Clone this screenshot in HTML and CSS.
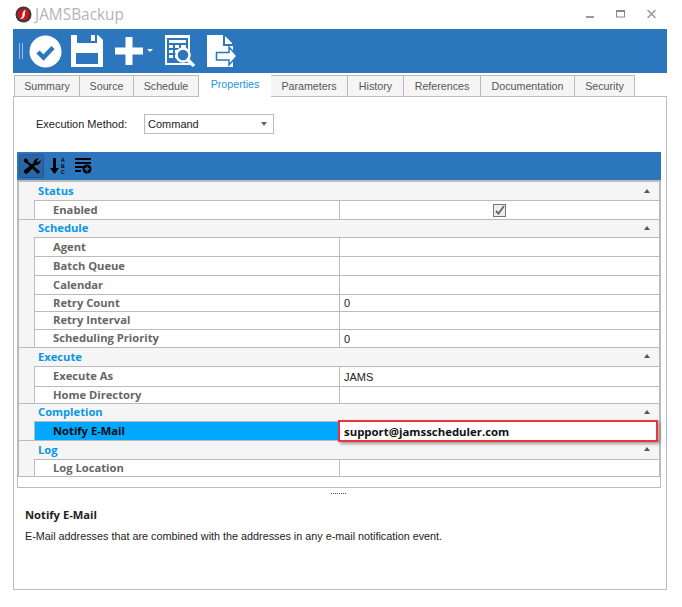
FILE: index.html
```html
<!DOCTYPE html>
<html lang="en">
<head>
    <meta charset="UTF-8">
    <title>JAMSBackup</title>
    <link rel="stylesheet" href="styles.css">
</head>
<body>
    <div class="window">
        <!-- title bar -->
        <div class="title-bar">
            <svg class="app-icon" width="17" height="17" viewBox="0 0 17 17">
                <circle cx="8.5" cy="8.5" r="8" fill="#3a3a3a"/>
                <circle cx="8.5" cy="8.5" r="6" fill="#c8161d"/>
                <path d="M10.5 3.5 Q7 6 7.5 9 Q7.5 11.5 5 13 Q9 13 9.7 9.5 Q10 6.5 10.5 3.5Z" fill="#fff"/>
            </svg>
            <span class="app-title">JAMSBackup</span>
            <div class="win-controls">
                <svg width="8" height="8" viewBox="0 0 8 8"><rect x="0" y="6" width="8" height="2" fill="#999"/></svg>
                <svg width="10" height="8" viewBox="0 0 10 8"><rect x="0.5" y="0.5" width="8" height="6.5" fill="none" stroke="#888"/><rect x="0" y="0" width="9" height="2" fill="#888"/></svg>
                <svg width="9" height="8" viewBox="0 0 9 8"><path d="M0.5 0 L8.5 8 M8.5 0 L0.5 8" stroke="#999" stroke-width="1.5"/></svg>
            </div>
        </div>

        <!-- main toolbar -->
        <div class="toolbar">
            <span class="grip"></span>
            <svg class="tool-check" width="33" height="33" viewBox="0 0 33 33">
                <circle cx="16.5" cy="16.5" r="16" fill="#fff"/>
                <path d="M9 17 L14.5 22.5 L24 12.5" fill="none" stroke="#2b76bd" stroke-width="4.5"/>
            </svg>
            <svg class="tool-save" width="32" height="32" viewBox="0 0 32 32">
                <path d="M0 0 H27 L32 5 V32 H0Z" fill="#fff"/>
                <rect x="6" y="0" width="20" height="8" fill="#2b76bd"/>
                <rect x="20" y="0" width="4" height="6" fill="#fff"/>
                <rect x="5" y="18" width="22" height="11" fill="#2b76bd"/>
            </svg>
            <svg class="tool-plus" width="28" height="28" viewBox="0 0 28 28">
                <path d="M10.5 0 H17.5 V10.5 H28 V17.5 H17.5 V28 H10.5 V17.5 H0 V10.5 H10.5Z" fill="#fff"/>
            </svg>
            <span class="caret"></span>
            <svg class="tool-report" width="32" height="32" viewBox="0 0 32 32">
                <rect x="1" y="0" width="25" height="30" fill="#fff"/>
                <rect x="3" y="3" width="21" height="25" fill="#2b76bd"/>
                <path d="M5 5 H22 V8 H5Z M5 10 H9 V13 H5Z M11 10 H15 V13 H11Z M17 10 H22 V13 H17Z M5 15 H9 V18 H5Z M11 15 H14 V18 H11Z M5 20 H9 V23 H5Z M11 20 H14 V23 H11Z" fill="#fff"/>
                <circle cx="19" cy="20" r="6.5" fill="#2b76bd" stroke="#fff" stroke-width="2.5"/>
                <path d="M24 25 L30 31" stroke="#fff" stroke-width="3.5"/>
            </svg>
            <svg class="tool-export" width="31" height="33" viewBox="0 0 31 33">
                <path d="M0 0 H16 V11 H26 V32 H0Z" fill="#fff"/>
                <path d="M18 1 L25 8 V9 H18Z" fill="#fff"/>
                <path d="M9.5 17.5 H22 V12 L30 21 L22 30 V25 H9.5Z" fill="#fff" stroke="#2b76bd" stroke-width="1.5"/>
            </svg>
        </div>

        <!-- tabs -->
        <div class="tabs">
            <div class="tab t-summary">Summary</div>
            <div class="tab t-source">Source</div>
            <div class="tab t-schedule">Schedule</div>
            <div class="tab tab-active t-properties">Properties</div>
            <div class="tab t-parameters">Parameters</div>
            <div class="tab t-history">History</div>
            <div class="tab t-references">References</div>
            <div class="tab t-documentation">Documentation</div>
            <div class="tab t-security">Security</div>
        </div>

        <div class="panel">
            <div class="method-row">
                <span class="method-label">Execution Method:</span>
                <div class="select">
                    <span>Command</span>
                    <span class="select-arrow"></span>
                </div>
            </div>

            <div class="grid-toolbar">
                <span class="grid-btn grid-btn-on">
                    <svg width="18" height="16" viewBox="0 0 18 16">
                        <path d="M0.5 2 L2.5 0 L5 2 L5 3.5 L17 13.5 L15 16 L3.5 5 L2 5Z" fill="#000"/>
                        <path d="M10.5 5 C10.5 2 13 0 16 0.5 L13.5 3 L15 4.5 L17.5 2 C18 5 15.5 7.5 12.5 7 L5 15 C4 16 2.5 16 1.5 15 C0.5 14 0.5 13 1.5 12Z" fill="#000"/>
                    </svg>
                </span>
                <span class="grid-btn">
                    <svg width="17" height="18" viewBox="0 0 17 18">
                        <path d="M3 1 H6 V11 H9 L4.5 17 L0 11 H3Z" fill="#000"/>
                        <text class="sort-letter" x="11" y="5">A</text>
                        <text class="sort-letter" x="11" y="11">B</text>
                        <text class="sort-letter" x="11" y="17">C</text>
                    </svg>
                </span>
                <span class="grid-btn">
                    <svg width="17" height="16" viewBox="0 0 17 16">
                        <path d="M0 0 H16 V2 H0Z M0 4 H16 V6 H0Z M0 8 H8 V10 H0Z M0 12 H6 V14 H0Z" fill="#000"/>
                        <circle cx="12" cy="11" r="4.5" fill="#000"/>
                        <path d="M12 8.5 V13.5 M9.5 11 H14.5" stroke="#2b76bd" stroke-width="1.3"/>
                    </svg>
                </span>
            </div>

            <div class="prop-grid">
                <div class="prop-rows">
                    <div class="group-row h18"><span>Status</span><i class="collapse"></i></div>
                    <div class="prop-row h19">
                        <div class="prop-name">Enabled</div>
                        <div class="prop-value center"><span class="check"><svg width="10" height="10" viewBox="0 0 10 10"><path d="M1 6 L3.5 8.5 L9 1" fill="none" stroke="#666" stroke-width="1.8"/></svg></span></div>
                    </div>
                    <div class="group-row h18"><span>Schedule</span><i class="collapse"></i></div>
                    <div class="prop-row h19"><div class="prop-name">Agent</div><div class="prop-value"></div></div>
                    <div class="prop-row h19"><div class="prop-name">Batch Queue</div><div class="prop-value"></div></div>
                    <div class="prop-row h19"><div class="prop-name">Calendar</div><div class="prop-value"></div></div>
                    <div class="prop-row h17"><div class="prop-name">Retry Count</div><div class="prop-value">0</div></div>
                    <div class="prop-row h18"><div class="prop-name">Retry Interval</div><div class="prop-value"></div></div>
                    <div class="prop-row h18"><div class="prop-name">Scheduling Priority</div><div class="prop-value">0</div></div>
                    <div class="group-row h19"><span>Execute</span><i class="collapse"></i></div>
                    <div class="prop-row h20"><div class="prop-name">Execute As</div><div class="prop-value">JAMS</div></div>
                    <div class="prop-row h17"><div class="prop-name">Home Directory</div><div class="prop-value"></div></div>
                    <div class="group-row h18"><span>Completion</span><i class="collapse"></i></div>
                    <div class="prop-row prop-row-selected h19">
                        <div class="prop-name">Notify E-Mail</div>
                        <div class="prop-value">
                            <span class="email">support@jamsscheduler.com</span>
                            <span class="highlight-box"></span>
                        </div>
                    </div>
                    <div class="group-row h19"><span>Log</span><i class="collapse"></i></div>
                    <div class="prop-row h17"><div class="prop-name">Log Location</div><div class="prop-value"></div></div>
                </div>
            </div>

            <div class="splitter"></div>

            <div class="desc">
                <div class="desc-title">Notify E-Mail</div>
                <div class="desc-text">E-Mail addresses that are combined with the addresses in any e-mail notification event.</div>
            </div>
        </div>
    </div>
</body>
</html>
```

FILE: styles.css
```css
body {
    margin: 0;
    background-color: white;
    font-family: "Liberation Sans", "Noto Sans", sans-serif;
    font-size: 11px;
    color: #333;
}
.window {
    width: 682px;
    height: 607px;
    overflow: hidden;
}

/* title bar */
.title-bar {
    height: 29px;
    display: flex;
    align-items: center;
    padding: 0 26px 0 15px;
    box-sizing: border-box;
}
.app-title {
    font-family: "Open Sans", sans-serif;
    font-size: 15.4px;
    color: #b5b5b5;
    margin-left: 3px;
}
.win-controls {
    margin-left: auto;
    display: flex;
    gap: 22px;
    margin-top: -1px;
}
.win-controls svg:last-child { margin-left: -1px; }

/* main toolbar */
.toolbar {
    height: 44px;
    margin: 0 15px 0 13px;
    background-color: #2b76bd;
    display: flex;
    align-items: center;
    padding-left: 6px;
}
.grip {
    width: 2px;
    height: 16px;
    border-left: 1px solid #9cc0e2;
    border-right: 1px solid #9cc0e2;
    margin-right: 6px;
}
.tool-save { margin-left: 9px; }
.tool-plus { margin-left: 12px; }
.caret {
    width: 0;
    height: 0;
    border-left: 3px solid transparent;
    border-right: 3px solid transparent;
    border-top: 3px solid white;
    margin-left: 4px;
    margin-bottom: 2px;
}
.tool-report { margin-left: 11px; }
.tool-export { margin-left: 11px; margin-top: 1px; }

/* tabs */
.tabs {
    display: flex;
    height: 23px;
    margin-left: 14px;
    position: relative;
    z-index: 1;
}
.tab {
    box-sizing: border-box;
    height: 22px;
    margin-top: 2px;
    background-color: #f5f5f5;
    border: 1px solid #bbb;
    border-left-width: 0;
    color: #555;
    font-size: 10.7px;
    text-align: center;
    line-height: 20px;
}
.tab:first-child { border-left-width: 1px; }
.tab-active {
    height: 25px;
    margin-top: 0;
    background-color: white;
    border: none;
    color: #1a96e0;
    line-height: 23px;
}
.t-summary { width: 66px; }
.t-source { width: 54px; }
.t-schedule { width: 65px; }
.t-properties { width: 72px; }
.t-parameters { width: 77px; }
.t-history { width: 56px; }
.t-references { width: 77px; }
.t-documentation { width: 94px; }
.t-security { width: 60px; }

.panel {
    box-sizing: border-box;
    height: 494px;
    margin: 0 15px 0 13px;
    border: 1px solid #bbb;
    padding: 17px 5px 0 3px;
}

/* execution method */
.method-row {
    display: flex;
    align-items: center;
    height: 20px;
    margin-bottom: 18px;
}
.method-label {
    margin-left: 19px;
    width: 108px;
    color: #222;
    margin-top: -1px;
}
.select {
    box-sizing: border-box;
    width: 130px;
    height: 20px;
    border: 1px solid #bbb;
    display: flex;
    align-items: center;
    justify-content: space-between;
    padding: 0 6px 0 3px;
    color: #222;
}
.select-arrow {
    border-left: 3.5px solid transparent;
    border-right: 3.5px solid transparent;
    border-top: 4px solid #666;
}

/* property grid */
.grid-toolbar {
    height: 28px;
    background-color: #2b76bd;
    display: flex;
    align-items: center;
    padding-left: 2px;
    gap: 3px;
}
.grid-btn {
    width: 22px;
    height: 24px;
    display: flex;
    align-items: center;
    justify-content: center;
    box-sizing: border-box;
}
.grid-btn-on {
    width: 25px;
    background-color: #2a66a3;
    border: 1px solid #235a91;
    border-radius: 2px;
}
.sort-letter {
    font-family: "Liberation Sans", sans-serif;
    font-size: 5.2px;
    font-weight: bold;
    fill: #000;
}
.prop-grid {
    box-sizing: border-box;
    height: 308px;
    border: 1px solid #bbb;
    border-top: none;
}
.prop-rows {
    border-top: 2px solid #bbb;
    border-left: 1px solid #bbb;
    border-right: 1px solid #bbb;
    border-bottom: 1px solid #bbb;
}
.h17 { height: 17px; }
.h18 { height: 18px; }
.h19 { height: 19px; }
.h20 { height: 20px; }
.group-row {
    box-sizing: border-box;
    background-color: #f5f5f5;
    color: #0a96e6;
    font-family: "Open Sans", sans-serif;
    font-size: 11.2px;
    font-weight: bold;
    padding: 0 9px 2px 19px;
    display: flex;
    align-items: center;
    justify-content: space-between;
    border-top: 1px solid #bbb;
}
.group-row:first-child {
    border-top: none;
    padding-bottom: 1px;
}
.collapse {
    border-left: 3.5px solid transparent;
    border-right: 3.5px solid transparent;
    border-bottom: 4px solid #555;
}
.prop-row {
    box-sizing: border-box;
    background-color: #f5f5f5;
    padding-left: 15px;
    display: flex;
}
.prop-name {
    box-sizing: border-box;
    width: 305px;
    padding: 0 0 2px 18px;
    background-color: white;
    border-top: 1px solid #bbb;
    border-left: 1px solid #bbb;
    color: #666;
    font-family: "Open Sans", sans-serif;
    font-size: 11.2px;
    font-weight: bold;
    display: flex;
    align-items: center;
}
.prop-value {
    flex: 1;
    box-sizing: border-box;
    padding-left: 4px;
    background-color: white;
    border-top: 1px solid #bbb;
    border-left: 1px solid #bbb;
    color: #222;
    display: flex;
    align-items: center;
    position: relative;
}
.prop-value.center {
    padding-left: 0;
    justify-content: center;
}
.check {
    box-sizing: border-box;
    width: 13px;
    height: 13px;
    border: 1px solid #777;
    background-color: #eee;
    display: flex;
    align-items: center;
    justify-content: center;
}
.prop-row-selected .prop-name {
    background-color: #00a8ff;
    color: #0a0a0a;
}
.email {
    color: #111;
    font-family: "Open Sans", sans-serif;
    font-size: 11.4px;
    font-weight: bold;
}
.highlight-box {
    position: absolute;
    left: -2px;
    top: -2px;
    width: 320px;
    height: 22px;
    box-sizing: border-box;
    border: 2px solid #ee3338;
    box-shadow: 2px 2px 3px rgba(0, 0, 0, 0.35);
}

.splitter {
    width: 15px;
    height: 1px;
    margin: 5px 0 0 314px;
    border-top: 1px dotted #555;
}

/* description */
.desc {
    padding: 12px 0 0 8px;
    color: #222;
}
.desc-title {
    font-family: "Open Sans", sans-serif;
    font-size: 11.2px;
    font-weight: bold;
    margin-bottom: 8px;
}
.desc-text { font-size: 10.8px; }
```
